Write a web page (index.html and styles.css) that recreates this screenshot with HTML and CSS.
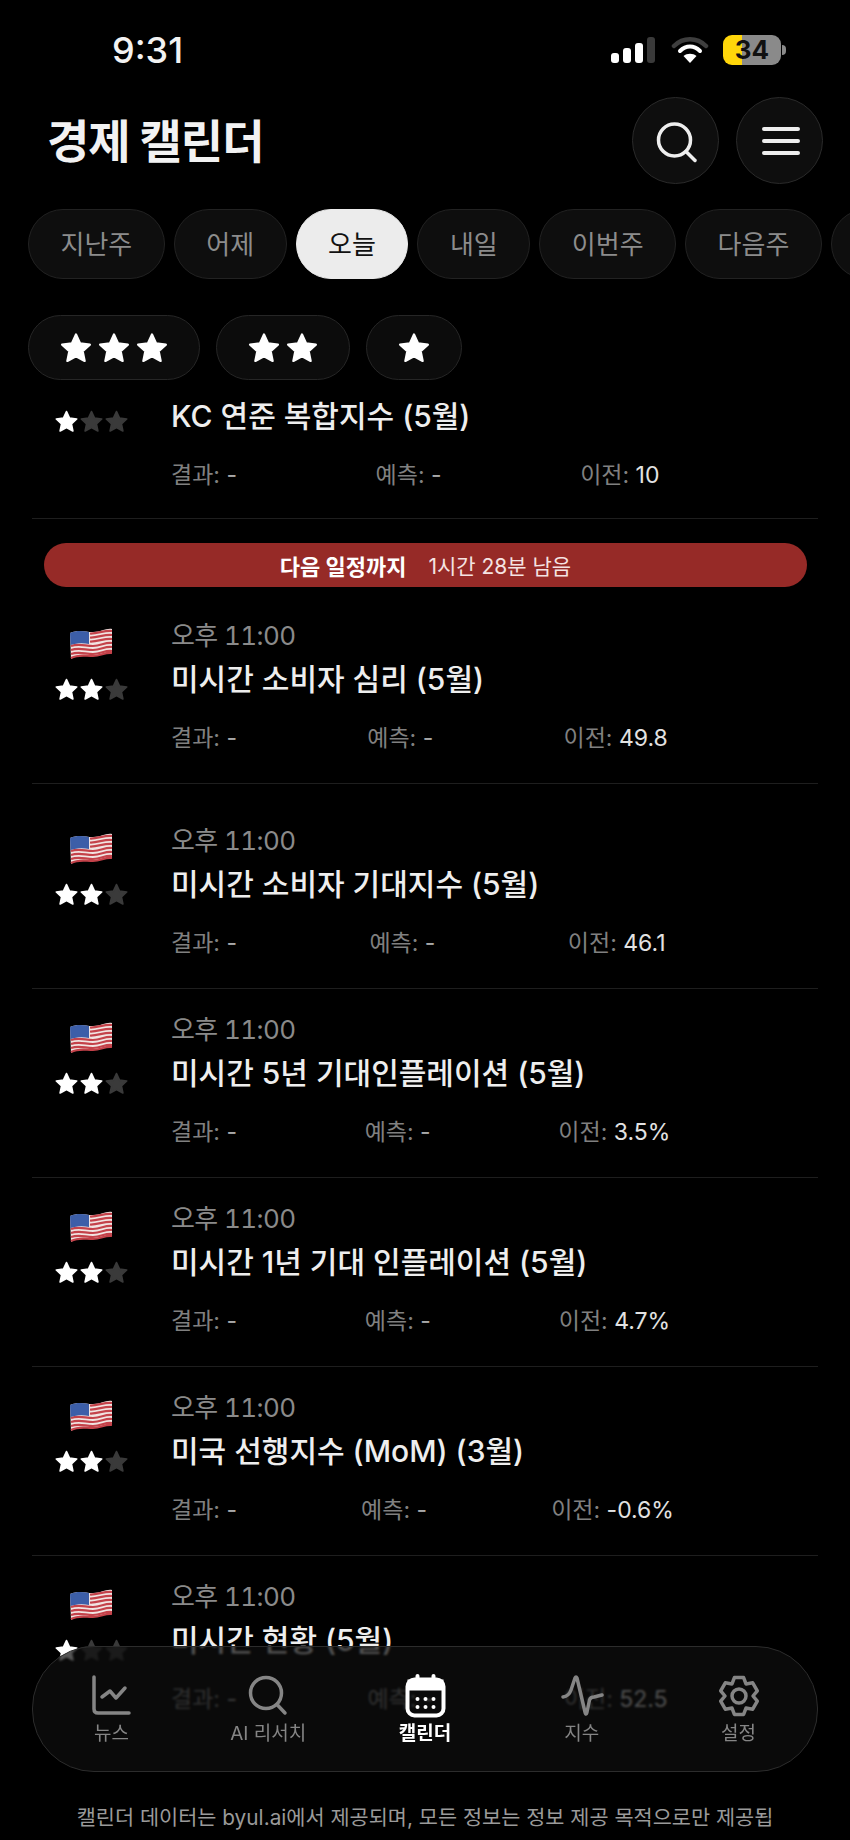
FILE: index.html
```html
<!DOCTYPE html>
<html lang="ko">
<head>
    <meta charset="UTF-8">
    <meta name="viewport" content="width=device-width, initial-scale=1.0">
    <title>경제 캘린더</title>
    <link rel="stylesheet" href="styles.css">
</head>
<body>
    <svg class="icon-defs" width="0" height="0" aria-hidden="true">
        <symbol id="star" viewBox="0 0 24 24">
            <path d="M12 2.5l2.9 6.3 6.9.8-5.1 4.7 1.4 6.8-6.1-3.3-6.1 3.3 1.4-6.8-5.1-4.7 6.9-.8z" fill="currentColor" stroke="currentColor" stroke-width="1.6" stroke-linejoin="round"/>
        </symbol>
        <symbol id="flag" viewBox="0 0 44 34">
            <path d="M1 7C10 3 16 6 24 6S37 2 43 3L43 27C36 26 31 30 23 30S9 28 2 33z" fill="#f1e4e2"/>
            <g fill="none" stroke="#c4424a" stroke-width="2.2">
                <path d="M21 7.500C28 8 36 4 43 5"/>
                <path d="M21 11.500C28 12 36 8 43 9"/>
                <path d="M21 15.500C28 16 36 12 43 13"/>
                <path d="M2 20C10 17 16 20 24 20S36 16 43 17"/>
                <path d="M2 24C10 21 16 24 24 24S36 20 43 21"/>
                <path d="M2 28C10 25 16 28 24 28S36 24 43 25"/>
                <path d="M2 32C10 28 16 30 24 30S36 26 43 27"/>
            </g>
            <path d="M1 7C8 4 14 5 20 6L20 18C14 17 8 17 1.500 19z" fill="#3c5ea8"/>
        </symbol>
    </svg>

    <div class="phone">
        <div class="status-bar">
            <span class="clock">9:31</span>
            <div class="status-icons">
                <svg width="44" height="28" viewBox="0 0 44 28">
                    <rect x="0" y="17" width="8" height="10" rx="3" fill="#fff"/>
                    <rect x="12" y="12" width="8" height="15" rx="3" fill="#fff"/>
                    <rect x="24" y="7" width="8" height="20" rx="3" fill="#fff"/>
                    <rect x="36" y="1" width="8" height="26" rx="3" fill="#3a3a3a"/>
                </svg>
                <svg class="wifi" width="38" height="28" viewBox="0 0 38 28">
                    <path d="M3 10C12 1 26 1 35 10" fill="none" stroke="#3e3e3e" stroke-width="4.500" stroke-linecap="round"/>
                    <path d="M9 15C15 9 23 9 29 15" fill="none" stroke="#fff" stroke-width="4" stroke-linecap="round"/>
                    <path d="M19 27L12.500 20C16 17 22 17 25.500 20z" fill="#fff"/>
                </svg>
                <div class="battery"><span>34</span></div>
                <div class="battery-nub"></div>
            </div>
        </div>

        <header class="top-bar">
            <h1>경제 캘린더</h1>
            <div class="top-actions">
                <button class="round-btn">
                    <svg width="44" height="44" viewBox="0 0 44 44" fill="none" stroke="#eee" stroke-width="3.500" stroke-linecap="round">
                        <circle cx="20.500" cy="21" r="16"/>
                        <path d="M32 32.500L41 41.500"/>
                    </svg>
                </button>
                <button class="round-btn">
                    <svg width="44" height="44" viewBox="0 0 44 44" fill="none" stroke="#eee" stroke-width="4" stroke-linecap="round">
                        <path d="M6 10H40M6 22H40M6 34H40"/>
                    </svg>
                </button>
            </div>
        </header>

        <div class="tabs">
            <div class="tab">지난주</div>
            <div class="tab">어제</div>
            <div class="tab active">오늘</div>
            <div class="tab">내일</div>
            <div class="tab">이번주</div>
            <div class="tab">다음주</div>
            <div class="tab tab-cut"></div>
        </div>

        <div class="chips">
            <div class="chip"><svg><use href="#star"/></svg><svg><use href="#star"/></svg><svg><use href="#star"/></svg></div>
            <div class="chip"><svg><use href="#star"/></svg><svg><use href="#star"/></svg></div>
            <div class="chip"><svg><use href="#star"/></svg></div>
        </div>

        <div class="list">
            <div class="list-scroll">
                <div class="event scrolled">
                    <div class="event-side">
                        <div class="stars"><svg><use href="#star"/></svg><svg class="off"><use href="#star"/></svg><svg class="off"><use href="#star"/></svg></div>
                    </div>
                    <div class="event-main">
                        <div class="event-title">KC 연준 복합지수 (5월)</div>
                        <div class="stats">
                            <span class="stat"><span class="stat-label">결과:</span> -</span>
                            <span class="stat"><span class="stat-label">예측:</span> -</span>
                            <span class="stat"><span class="stat-label">이전:</span> <b>10</b></span>
                        </div>
                    </div>
                </div>

                <div class="next-banner"><strong>다음 일정까지</strong><span>1시간 28분 남음</span></div>

                <div class="event after-banner">
                    <div class="event-side">
                        <svg class="flag"><use href="#flag"/></svg>
                        <div class="stars"><svg><use href="#star"/></svg><svg><use href="#star"/></svg><svg class="off"><use href="#star"/></svg></div>
                    </div>
                    <div class="event-main">
                        <div class="event-time">오후 11:00</div>
                        <div class="event-title">미시간 소비자 심리 (5월)</div>
                        <div class="stats">
                            <span class="stat"><span class="stat-label">결과:</span> -</span>
                            <span class="stat"><span class="stat-label">예측:</span> -</span>
                            <span class="stat"><span class="stat-label">이전:</span> <b>49.8</b></span>
                        </div>
                    </div>
                </div>

                <div class="event tall">
                    <div class="event-side">
                        <svg class="flag"><use href="#flag"/></svg>
                        <div class="stars"><svg><use href="#star"/></svg><svg><use href="#star"/></svg><svg class="off"><use href="#star"/></svg></div>
                    </div>
                    <div class="event-main">
                        <div class="event-time">오후 11:00</div>
                        <div class="event-title">미시간 소비자 기대지수 (5월)</div>
                        <div class="stats">
                            <span class="stat"><span class="stat-label">결과:</span> -</span>
                            <span class="stat"><span class="stat-label">예측:</span> -</span>
                            <span class="stat"><span class="stat-label">이전:</span> <b>46.1</b></span>
                        </div>
                    </div>
                </div>

                <div class="event">
                    <div class="event-side">
                        <svg class="flag"><use href="#flag"/></svg>
                        <div class="stars"><svg><use href="#star"/></svg><svg><use href="#star"/></svg><svg class="off"><use href="#star"/></svg></div>
                    </div>
                    <div class="event-main">
                        <div class="event-time">오후 11:00</div>
                        <div class="event-title">미시간 5년 기대인플레이션 (5월)</div>
                        <div class="stats">
                            <span class="stat"><span class="stat-label">결과:</span> -</span>
                            <span class="stat"><span class="stat-label">예측:</span> -</span>
                            <span class="stat"><span class="stat-label">이전:</span> <b>3.5%</b></span>
                        </div>
                    </div>
                </div>

                <div class="event">
                    <div class="event-side">
                        <svg class="flag"><use href="#flag"/></svg>
                        <div class="stars"><svg><use href="#star"/></svg><svg><use href="#star"/></svg><svg class="off"><use href="#star"/></svg></div>
                    </div>
                    <div class="event-main">
                        <div class="event-time">오후 11:00</div>
                        <div class="event-title">미시간 1년 기대 인플레이션 (5월)</div>
                        <div class="stats">
                            <span class="stat"><span class="stat-label">결과:</span> -</span>
                            <span class="stat"><span class="stat-label">예측:</span> -</span>
                            <span class="stat"><span class="stat-label">이전:</span> <b>4.7%</b></span>
                        </div>
                    </div>
                </div>

                <div class="event">
                    <div class="event-side">
                        <svg class="flag"><use href="#flag"/></svg>
                        <div class="stars"><svg><use href="#star"/></svg><svg><use href="#star"/></svg><svg class="off"><use href="#star"/></svg></div>
                    </div>
                    <div class="event-main">
                        <div class="event-time">오후 11:00</div>
                        <div class="event-title">미국 선행지수 (MoM) (3월)</div>
                        <div class="stats">
                            <span class="stat"><span class="stat-label">결과:</span> -</span>
                            <span class="stat"><span class="stat-label">예측:</span> -</span>
                            <span class="stat"><span class="stat-label">이전:</span> <b>-0.6%</b></span>
                        </div>
                    </div>
                </div>

                <div class="event">
                    <div class="event-side">
                        <svg class="flag"><use href="#flag"/></svg>
                        <div class="stars"><svg><use href="#star"/></svg><svg class="off"><use href="#star"/></svg><svg class="off"><use href="#star"/></svg></div>
                    </div>
                    <div class="event-main">
                        <div class="event-time">오후 11:00</div>
                        <div class="event-title">미시간 현황 (5월)</div>
                        <div class="stats">
                            <span class="stat"><span class="stat-label">결과:</span> -</span>
                            <span class="stat"><span class="stat-label">예측:</span> -</span>
                            <span class="stat"><span class="stat-label">이전:</span> <b>52.5</b></span>
                        </div>
                    </div>
                </div>
            </div>
        </div>

        <nav class="bottom-nav">
            <div class="nav-item">
                <svg width="44" height="44" viewBox="0 0 44 44" fill="none" stroke="currentColor" stroke-width="3.500" stroke-linecap="round" stroke-linejoin="round">
                    <path d="M5 3V35Q5 39 9 39H40"/>
                    <path d="M13 23L21 17L27 24L36 14"/>
                </svg>
                <span>뉴스</span>
            </div>
            <div class="nav-item">
                <svg width="44" height="44" viewBox="0 0 44 44" fill="none" stroke="currentColor" stroke-width="3.500" stroke-linecap="round">
                    <circle cx="20" cy="19" r="15.500"/>
                    <path d="M31 30.500L39 39"/>
                </svg>
                <span>AI 리서치</span>
            </div>
            <div class="nav-item current">
                <svg width="44" height="44" viewBox="0 0 44 44">
                    <rect x="4.500" y="5.500" width="36" height="36" rx="7" fill="none" stroke="currentColor" stroke-width="4"/>
                    <rect x="4.500" y="5.500" width="36" height="11" fill="currentColor"/>
                    <path d="M14.500 2V10M30.500 2V10" stroke="currentColor" stroke-width="4" stroke-linecap="round"/>
                    <g fill="currentColor">
                        <circle cx="14.500" cy="25" r="2"/><circle cx="22.500" cy="25" r="2"/><circle cx="30.500" cy="25" r="2"/>
                        <circle cx="14.500" cy="33" r="2"/><circle cx="22.500" cy="33" r="2"/><circle cx="30.500" cy="33" r="2"/>
                    </g>
                </svg>
                <span>캘린더</span>
            </div>
            <div class="nav-item">
                <svg width="44" height="44" viewBox="0 0 44 44" fill="none" stroke="currentColor" stroke-width="3.500" stroke-linecap="round" stroke-linejoin="round">
                    <path d="M3 23Q9 22 11 16L15 4Q16 2 17 4L25 38Q26 42 27 38L29.500 26Q30.500 23 34 23L42 21"/>
                </svg>
                <span>지수</span>
            </div>
            <div class="nav-item">
                <svg width="44" height="44" viewBox="0 0 44 44" fill="none" stroke="currentColor" stroke-width="3.500" stroke-linejoin="round">
                    <polygon points="17.400,3.600 26.600,3.600 29,9.900 35.700,8.800 40.300,16.800 36,22 40.300,27.200 35.700,35.200 29,34.100 26.600,40.400 17.400,40.400 15,34.100 8.300,35.200 3.700,27.200 8,22 3.700,16.800 8.300,8.800 15,9.900"/>
                    <circle cx="22" cy="22" r="7"/>
                </svg>
                <span>설정</span>
            </div>
        </nav>

        <p class="footnote">캘린더 데이터는 byul.ai에서 제공되며, 모든 정보는 정보 제공 목적으로만 제공됩</p>
    </div>
</body>
</html>
```

FILE: styles.css
```css
* {
    margin: 0;
    padding: 0;
    box-sizing: border-box;
    font-family: 'Inter', 'Noto Sans CJK KR', sans-serif;
}

body {
    background-color: #000;
}

.icon-defs {
    position: absolute;
}

.phone {
    position: relative;
    display: flex;
    flex-direction: column;
    width: 850px;
    height: 1840px;
    overflow: hidden;
    background-color: #000;
    color: #f2f2f2;
}

/* status bar */
.status-bar {
    display: flex;
    align-items: center;
    justify-content: space-between;
    height: 97px;
    padding: 0 64px 0 112px;
}

.clock {
    font-size: 36px;
    font-weight: 500;
    margin-top: 3px;
}

.status-icons {
    display: flex;
    align-items: center;
    margin-top: 3px;
}

.wifi {
    margin-left: 16px;
}

.battery {
    width: 58px;
    height: 30px;
    margin-left: 14px;
    border-radius: 9px;
    background: linear-gradient(90deg, #ffd60a 33%, #8a8a8a 33%);
    color: #111;
    font-size: 26px;
    font-weight: 700;
    line-height: 30px;
    text-align: center;
}

.battery-nub {
    width: 4px;
    height: 10px;
    margin-left: 1px;
    border-radius: 0 4px 4px 0;
    background-color: #8a8a8a;
}

/* header */
.top-bar {
    display: flex;
    align-items: center;
    justify-content: space-between;
    height: 87px;
    padding: 0 27px 0 47px;
}

h1 {
    margin-top: -5px;
    font-size: 46px;
    font-weight: 700;
    letter-spacing: -1px;
}

.top-actions {
    display: flex;
    gap: 17px;
}

.round-btn {
    display: flex;
    align-items: center;
    justify-content: center;
    width: 87px;
    height: 87px;
    border: 1px solid #2a2a2a;
    border-radius: 50%;
    background-color: #0e0e0e;
}

/* day tabs */
.tabs {
    display: flex;
    gap: 9px;
    height: 70px;
    margin-top: 25px;
    padding-left: 28px;
}

.tab {
    flex-shrink: 0;
    height: 70px;
    padding: 0 31.5px;
    border: 1px solid #222;
    border-radius: 35px;
    background-color: #0e0e0e;
    color: #8c8c8c;
    font-size: 26px;
    line-height: 70px;
}

.tab.active {
    border-color: #ececec;
    background-color: #ececec;
    color: #111;
}

.tab-cut {
    width: 110px;
}

/* importance filter */
.chips {
    display: flex;
    gap: 16px;
    height: 65px;
    margin-top: 36px;
    padding-left: 28px;
}

.chip {
    display: flex;
    align-items: center;
    gap: 4px;
    padding: 0 30px;
    border: 1px solid #262626;
    border-radius: 33px;
    background-color: #0c0c0c;
}

.chip svg {
    width: 34px;
    height: 34px;
    color: #fff;
}

/* event list */
.list {
    flex: 1;
    margin-top: 10px;
    overflow: hidden;
}

.list-scroll {
    margin: 0 32px;
}

.event {
    display: flex;
    padding: 25px 20px 30px 0;
    border-bottom: 1px solid #1e1e1e;
}

.event.scrolled {
    padding-top: 8px;
    padding-bottom: 28px;
}

.event.scrolled .event-title {
    margin-top: 0;
}

.event.scrolled .stars {
    margin-top: 11px;
}

.event.after-banner {
    padding-top: 33px;
}

.event.tall {
    padding-top: 41px;
}

.event:last-child {
    border-bottom: none;
}

.event-side {
    flex-shrink: 0;
    width: 118px;
    margin-right: 21px;
    text-align: center;
}

.flag {
    display: block;
    width: 44px;
    height: 34px;
    margin: 6px auto 0;
}

.stars {
    display: flex;
    justify-content: center;
    margin-top: 17px;
}

.stars svg {
    width: 25px;
    height: 25px;
    color: #fff;
}

.stars svg.off {
    color: #3a3a3a;
}

.event-main {
    flex: 1;
}

.event-time {
    color: #8a8a8a;
    font-size: 26px;
    font-variant-numeric: tabular-nums;
    letter-spacing: -0.6px;
    line-height: 32px;
}

.event-title {
    margin-top: 9px;
    color: #eee;
    font-size: 30px;
    font-weight: 500;
    line-height: 36px;
}

.stats {
    display: flex;
    margin-top: 26px;
    color: #a8a8a8;
    font-size: 23px;
    line-height: 30px;
}

.stat {
    margin-right: auto;
    white-space: nowrap;
}

.stat-label {
    color: #808080;
}

.stat b {
    color: #e2e2e2;
    font-weight: 400;
}

.next-banner {
    display: flex;
    align-items: center;
    justify-content: center;
    gap: 22px;
    height: 44px;
    margin: 24px 11px 0 12px;
    border-radius: 22px;
    background-color: #962a27;
    color: #f5e3e2;
    font-size: 21px;
}

.next-banner strong {
    color: #fff;
    font-size: 22px;
    font-weight: 700;
}

/* floating nav sits over the list */
.bottom-nav {
    position: absolute;
    left: 32px;
    top: 1646px;
    display: grid;
    grid-template-columns: repeat(5, 1fr);
    width: 786px;
    height: 126px;
    border: 1px solid #2c2c2c;
    border-radius: 62px;
    background-color: rgba(14, 14, 14, 0.7);
    backdrop-filter: blur(1px);
}

.nav-item {
    display: flex;
    flex-direction: column;
    align-items: center;
    padding-top: 27px;
    color: #858585;
    font-size: 19px;
    line-height: 26px;
}

.nav-item span {
    margin-top: 3px;
}

.nav-item.current {
    color: #fff;
    font-weight: 700;
}

.footnote {
    position: absolute;
    left: 0;
    right: 0;
    top: 1803px;
    color: #9a9a9a;
    font-size: 20.8px;
    line-height: 30px;
    text-align: center;
    white-space: nowrap;
}
```
